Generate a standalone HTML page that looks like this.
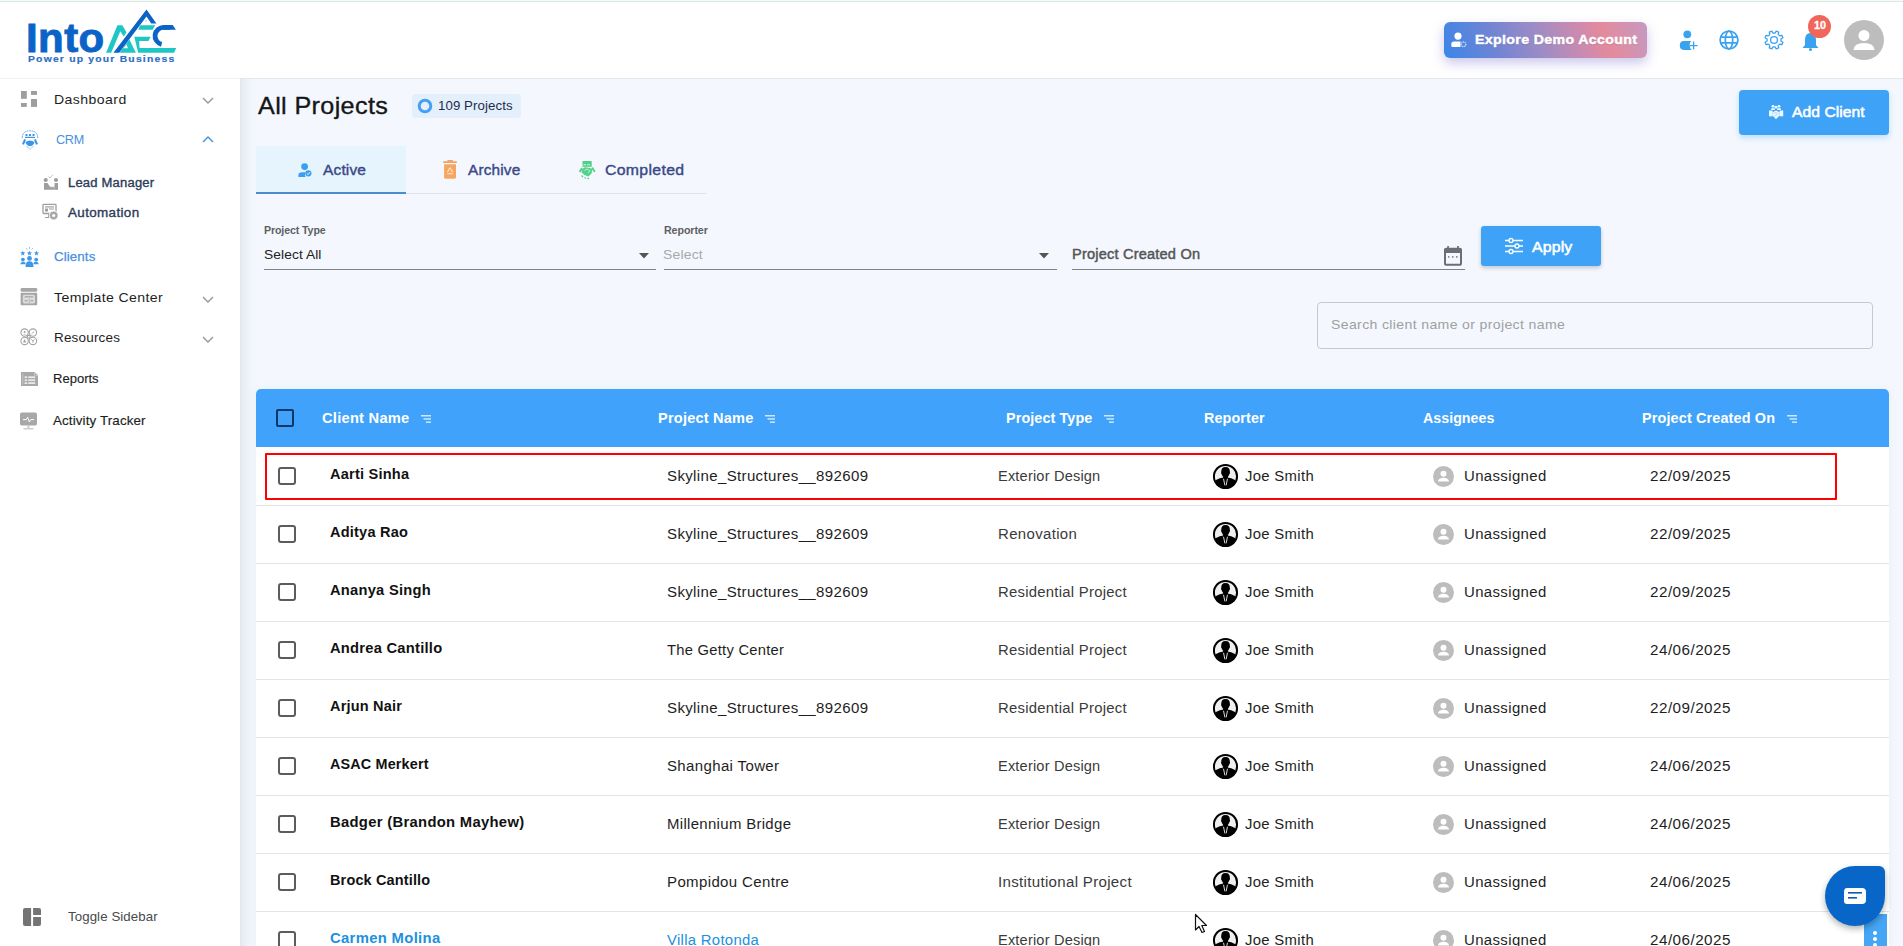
<!DOCTYPE html>
<html><head><meta charset="utf-8"><title>All Projects</title>
<style>
html,body{margin:0;padding:0;}
body{width:1903px;height:946px;overflow:hidden;position:relative;font-family:"Liberation Sans", sans-serif;background:#f4f8fe;}
.t{position:absolute;line-height:1;white-space:nowrap;font-family:"Liberation Sans", sans-serif;}
.r{position:absolute;}
svg.r{overflow:visible}
</style></head><body>
<div class="r" style="left:0px;top:0px;width:1903px;height:946px;background:#f4f8fe"></div>
<div class="r" style="left:240px;top:79px;width:14px;height:867px;background:linear-gradient(to right,#e2e8ef,#e9eef6 25%,#f4f8fe)"></div>
<div class="r" style="left:0px;top:0px;width:1903px;height:78px;background:#fff"></div>
<div class="r" style="left:0px;top:0px;width:1903px;height:1px;background:#f2fbf6"></div>
<div class="r" style="left:0px;top:1px;width:1903px;height:1px;background:#dfe7e4"></div>
<div class="r" style="left:0px;top:78px;width:240px;height:1px;background:#f1f2f2"></div>
<div class="r" style="left:240px;top:78px;width:1663px;height:1px;background:#e2e7ea"></div>
<div class="t" style="left:26.2px;top:18.09px;font-size:41px;font-weight:700;color:#0b63c7;letter-spacing:0.403px;transform:scaleX(1.0248);transform-origin:0 0;-webkit-text-stroke:0.9px #0b63c7;">Into</div>
<svg class="r" style="left:100px;top:5px" width="80" height="52" viewBox="0 0 80 52">
<polygon points="6.1,47.7 17.4,20.3 22.4,20.3 26.5,27.6 23.6,31.6 20.3,26.2 11.2,47.7" fill="#1ec6c6"/>
<polygon points="19.6,47.7 29.4,34.6 35.9,47.7" fill="#1ec6c6"/>
<polygon points="23.3,43.2 27.9,43.2 26.6,39.6" fill="#fff"/>
<polygon points="13.4,47.7 46.5,4.4 56.4,18.6 51.2,18.6 46.5,11.5 19.2,47.7" fill="#0b63c7"/>
<polygon points="40.1,20.3 55.2,20.3 52.6,24.7 38.3,24.7" fill="#1ec6c6"/>
<polygon points="34.3,31.7 50.6,31.7 48.5,36 39.2,36 39.5,43 76.2,43 74.1,47.7 38.2,47.7" fill="#1ec6c6"/>
<path d="M70,22.35 H64 A8.6,8.6 0 0 0 61.6,39.3" stroke="#0b63c7" stroke-width="4.8" fill="none"/>
<polygon points="63,19.95 72.7,19.95 75.9,24.75 63,24.75" fill="#0b63c7"/>
<rect x="45.6" y="15.3" width="1" height="1" fill="#6f9fd8"/>
</svg>
<div class="t" style="left:27.7px;top:55.12px;font-size:8.6px;font-weight:700;color:#2e6dc2;letter-spacing:0.997px;transform:scaleX(1.2057);transform-origin:0 0;-webkit-text-stroke:0.15px #2e6dc2;">Power up your Business</div>
<div class="r" style="left:1444px;top:22px;width:203px;height:36px;border-radius:6px;background:linear-gradient(70deg,#3a86e8 0%,#6f84d4 25%,#a08cc4 48%,#d08aac 68%,#e48a9c 78%,#c49ac2 100%);box-shadow:0 5px 12px rgba(115,105,205,0.38)"></div>
<svg class="r" style="left:1451px;top:32px" width="16" height="16" viewBox="0 0 16 16"><circle cx="7" cy="4.1" r="3.6" fill="#fff"/><path d="M0.3,12 Q0.3,9.5 3,9.5 L9.5,9.5 L9.5,15 L1.5,15 Q0.3,15 0.3,13.5Z" fill="#fff"/><circle cx="12.5" cy="12.3" r="2.3" fill="none" stroke="#c9dcf7" stroke-width="1.3" stroke-dasharray="1.2 0.6"/></svg>
<div class="t" style="left:1475.0px;top:33.03px;font-size:13.2px;font-weight:700;color:#fff;letter-spacing:0.34px;transform:scaleX(1.0717);transform-origin:0 0;-webkit-text-stroke:0.45px #fff;text-shadow:0 1px 1px rgba(0,0,0,0.18)">Explore Demo Account</div>
<svg class="r" style="left:1679px;top:29px" width="20" height="22" viewBox="0 0 20 22"><circle cx="8.3" cy="5.3" r="3.9" fill="#3aa3f0"/><path d="M4.8,12.1 H12.5 Q10.6,13.2 10.6,15.6 Q10.6,19 12.6,20.9 H4.8 Q0.8,20.9 0.8,16.5 Q0.8,12.1 4.8,12.1Z" fill="#3aa3f0"/><path d="M10.6,16.6 H18.6 M14.6,12.6 V20.4" stroke="#3aa3f0" stroke-width="1.3"/></svg>
<svg class="r" style="left:1719px;top:30px" width="20" height="20" viewBox="0 0 20 20"><g fill="none" stroke="#3aa3f0" stroke-width="1.7"><circle cx="10" cy="10" r="8.9"/><ellipse cx="10" cy="10" rx="3.7" ry="8.9"/><path d="M1.5,7.1H18.5M1.5,12.8H18.5"/></g></svg>
<svg class="r" style="left:1763.6px;top:30.4px" width="20" height="20" viewBox="0 0 20 20"><polygon points="11.03,3.08 12.23,1.07 14.74,2.11 14.16,4.37 15.63,5.84 17.89,5.26 18.93,7.77 16.92,8.97 16.92,11.03 18.93,12.23 17.89,14.74 15.63,14.16 14.16,15.63 14.74,17.89 12.23,18.93 11.03,16.92 8.97,16.92 7.77,18.93 5.26,17.89 5.84,15.63 4.37,14.16 2.11,14.74 1.07,12.23 3.08,11.03 3.08,8.97 1.07,7.77 2.11,5.26 4.37,5.84 5.84,4.37 5.26,2.11 7.77,1.07 8.97,3.08" fill="none" stroke="#3aa3f0" stroke-width="1.3" stroke-linejoin="round"/><circle cx="10" cy="10" r="3.4" fill="none" stroke="#3aa3f0" stroke-width="1.3"/></svg>
<svg class="r" style="left:1802px;top:32px" width="17" height="19" viewBox="0 0 17 19"><path d="M8.5,1 Q14,1 14,8 L14,13 L16.5,16 L0.5,16 L3,13 L3,8 Q3,1 8.5,1Z" fill="#3aa3f0"/><circle cx="8.5" cy="17.5" r="1.5" fill="#3aa3f0"/></svg>
<div class="r" style="left:1808px;top:15px;width:23px;height:23px;border-radius:50%;background:#f0665a"></div>
<div class="t" style="left:1813.8px;top:20.29px;font-size:11px;font-weight:700;color:#fff;letter-spacing:-0.122px;transform:scaleX(0.9852);transform-origin:0 0;-webkit-text-stroke:0.3px #fff;">10</div>
<div class="r" style="left:1844px;top:20px;width:40px;height:40px;border-radius:50%;background:#bdbdbd"></div>
<svg class="r" style="left:1844px;top:20px" width="40" height="40" viewBox="0 0 40 40"><circle cx="20" cy="15.5" r="5.5" fill="#fff"/><path d="M9.5,30 Q10,23 20,23 Q30,23 30.5,30 Z" fill="#fff"/></svg>
<div class="r" style="left:0px;top:79px;width:240px;height:867px;background:#fff"></div>
<svg class="r" style="left:21px;top:91px" width="16" height="16" viewBox="0 0 16 16"><g fill="#9e9e9e"><rect x="0" y="0" width="5.8" height="7.8"/><rect x="0" y="12" width="5.8" height="3.9"/><rect x="10" y="0" width="6" height="3.9"/><rect x="10" y="8" width="6" height="7.9"/></g></svg>
<div class="t" style="left:53.8px;top:93.00px;font-size:13px;font-weight:400;color:#1e1e1e;letter-spacing:0.398px;transform:scaleX(1.0811);transform-origin:0 0;">Dashboard</div>
<svg class="r" style="left:202px;top:97px" width="12" height="7" viewBox="0 0 12 7"><path d="M1,1 L6,6 L11,1" fill="none" stroke="#969696" stroke-width="1.4"/></svg>
<svg class="r" style="left:21px;top:130px" width="18" height="20" viewBox="0 0 18 20"><g fill="none" stroke="#4a9ae8" stroke-width="0.9" stroke-dasharray="1.6 0.6"><path d="M1.2,8 Q1.5,0.8 9,0.8 Q16.5,0.8 16.8,8"/></g><g fill="#3d93e6"><rect x="4.5" y="4" width="2" height="2"/><rect x="8" y="4" width="2" height="2"/><rect x="11.5" y="4" width="2" height="2"/><rect x="4" y="6.8" width="10" height="1.2"/><path d="M1,14 L3.2,9 L5,9.7 L3,14.8Z"/><path d="M17,14 L14.8,9 L13,9.7 L15,14.8Z"/><path d="M4.5,12 Q9,8.8 13.5,12 Q13,15.5 9,16.2 Q5,15.5 4.5,12Z"/></g><path d="M5.5,16 L9,19.5 L12.5,16" fill="none" stroke="#4a9ae8" stroke-width="0.9" stroke-dasharray="1 0.7"/></svg>
<div class="t" style="left:55.8px;top:133.00px;font-size:13px;font-weight:400;color:#4a8fe0;letter-spacing:-0.288px;transform:scaleX(0.9716);transform-origin:0 0;">CRM</div>
<svg class="r" style="left:202px;top:136px" width="12" height="7" viewBox="0 0 12 7"><path d="M1,6 L6,1 L11,6" fill="none" stroke="#3d8fe0" stroke-width="1.4"/></svg>
<svg class="r" style="left:43px;top:174px" width="16" height="16" viewBox="0 0 16 16"><g fill="#9e9e9e"><circle cx="2.7" cy="6" r="2.1"/><circle cx="13" cy="6" r="2.1"/><path d="M1,9 H4.5 L7,12.8 L11.5,12.8 V15.8 H1Z"/><path d="M11.5,9 H15 V15.8 H11.5Z"/></g><path d="M5.5,2.5 L7,4 L10,0.8" fill="none" stroke="#b0b0b0" stroke-width="0.8"/><path d="M11,12.8 H8" stroke="#fff" stroke-width="0.6"/></svg>
<div class="t" style="left:68.1px;top:177.42px;font-size:12.5px;font-weight:400;color:#2b3b5a;letter-spacing:0.192px;transform:scaleX(1.0409);transform-origin:0 0;-webkit-text-stroke:0.35px #2b3b5a;">Lead Manager</div>
<svg class="r" style="left:42px;top:203px" width="18" height="18" viewBox="0 0 18 18"><rect x="1" y="1.3" width="13" height="9.2" rx="0.8" fill="none" stroke="#9e9e9e" stroke-width="1.3"/><rect x="3" y="3.3" width="9" height="1.2" fill="#9e9e9e"/><rect x="3" y="5.5" width="3" height="3" fill="#9e9e9e"/><rect x="7" y="5.5" width="5" height="1" fill="#9e9e9e"/><rect x="6" y="11" width="3" height="3" fill="#9e9e9e"/><rect x="3" y="14" width="8" height="1" fill="#9e9e9e"/><circle cx="11.7" cy="12.5" r="5" fill="#fff"/><circle cx="11.7" cy="12.5" r="4.2" fill="#a8a8a8" stroke="#fff" stroke-width="0.6" stroke-dasharray="1.2 1"/><circle cx="11.7" cy="12.5" r="1.6" fill="#fff"/></svg>
<div class="t" style="left:68.1px;top:207.22px;font-size:12.5px;font-weight:400;color:#2b3b5a;letter-spacing:0.327px;transform:scaleX(1.0750);transform-origin:0 0;-webkit-text-stroke:0.35px #2b3b5a;">Automation</div>
<svg class="r" style="left:20px;top:247px" width="19" height="21" viewBox="0 0 19 21"><g fill="#3d97ec"><polygon points="2.80,3.70 3.49,5.35 5.27,5.50 3.91,6.66 4.33,8.40 2.80,7.47 1.27,8.40 1.69,6.66 0.33,5.50 2.11,5.35"/><polygon points="9.50,3.70 10.19,5.35 11.97,5.50 10.61,6.66 11.03,8.40 9.50,7.47 7.97,8.40 8.39,6.66 7.03,5.50 8.81,5.35"/><polygon points="16.50,3.70 17.19,5.35 18.97,5.50 17.61,6.66 18.03,8.40 16.50,7.47 14.97,8.40 15.39,6.66 14.03,5.50 15.81,5.35"/><circle cx="9.5" cy="11.4" r="2.4"/><circle cx="2.9" cy="12.6" r="1.9"/><circle cx="16.2" cy="12.6" r="1.9"/><path d="M0.2,17.3 Q0.5,14.8 2.9,14.8 Q5,14.8 5.6,16.2 L5.2,17.3Z"/><path d="M18.8,17.3 Q18.5,14.8 16.2,14.8 Q14,14.8 13.4,16.2 L13.8,17.3Z"/><path d="M5.5,19.5 Q5.5,14.3 9.5,14.3 Q13.5,14.3 13.5,19.5 Q13.5,20 13,20 L6,20 Q5.5,20 5.5,19.5Z"/></g><g stroke="#3d97ec" stroke-width="0.7"><path d="M9.5,0.2 V1.8"/><path d="M6.2,1.2 L7.2,2.4"/><path d="M12.8,1.2 L11.8,2.4"/></g></svg>
<div class="t" style="left:54.4px;top:250.00px;font-size:13px;font-weight:400;color:#4a8fe0;letter-spacing:0.104px;transform:scaleX(1.0242);transform-origin:0 0;-webkit-text-stroke:0.25px #4a8fe0;">Clients</div>
<svg class="r" style="left:20px;top:288px" width="18" height="18" viewBox="0 0 18 18"><rect x="0.6" y="0" width="16.6" height="3.8" rx="1.3" fill="#a6a6a6"/><rect x="0.6" y="4.8" width="16.6" height="12.4" rx="1" fill="#a6a6a6"/><rect x="2.8" y="6.8" width="12.2" height="8.6" rx="1.6" fill="#dcdcdc"/><rect x="4.6" y="8.3" width="8.6" height="1.1" fill="#9e9e9e"/><rect x="4.6" y="12.2" width="3" height="1.1" fill="#9e9e9e"/><rect x="10.5" y="12.2" width="2.7" height="1.1" fill="#9e9e9e"/><rect x="8.8" y="10.5" width="1.1" height="4.9" fill="#bdbdbd"/></svg>
<div class="t" style="left:54.0px;top:291.00px;font-size:13px;font-weight:400;color:#1e1e1e;letter-spacing:0.353px;transform:scaleX(1.0843);transform-origin:0 0;">Template Center</div>
<svg class="r" style="left:202px;top:295.5px" width="12" height="7" viewBox="0 0 12 7"><path d="M1,1 L6,6 L11,1" fill="none" stroke="#969696" stroke-width="1.4"/></svg>
<svg class="r" style="left:20px;top:328px" width="18" height="18" viewBox="0 0 18 18"><g fill="none" stroke="#a3a3a3" stroke-width="1.1"><circle cx="4.6" cy="4.6" r="3.7"/><circle cx="12.9" cy="4.6" r="3.7"/><circle cx="4.6" cy="12.9" r="3.7"/><circle cx="12.9" cy="12.9" r="3.7"/><rect x="7.4" y="7.4" width="2.7" height="2.7"/></g><g fill="#a3a3a3"><circle cx="4.6" cy="4" r="1"/><path d="M3,6.6 Q4.6,5 6.2,6.6Z"/><path d="M11.5,5.8 L14.3,3.3" stroke="#a3a3a3" stroke-width="0.9"/><path d="M4.6,11 L3,14.5 H6.2Z"/><path d="M11.3,11.2 L12.9,13 L14.5,11.2 M12.9,13 V14.8" stroke="#a3a3a3" stroke-width="0.9" fill="none"/></g></svg>
<div class="t" style="left:54.0px;top:331.00px;font-size:13px;font-weight:400;color:#1e1e1e;letter-spacing:0.183px;transform:scaleX(1.0367);transform-origin:0 0;">Resources</div>
<svg class="r" style="left:202px;top:335.5px" width="12" height="7" viewBox="0 0 12 7"><path d="M1,1 L6,6 L11,1" fill="none" stroke="#969696" stroke-width="1.4"/></svg>
<svg class="r" style="left:21px;top:372px" width="17" height="14" viewBox="0 0 17 14"><path d="M0,0 H13.5 L17,3.3 V14 H0Z" fill="#a8a8a8"/><path d="M13.5,0 V3.3 H17" fill="none" stroke="#d6d6d6" stroke-width="0.7"/><rect x="1.5" y="1.5" width="0.7" height="11" fill="#cfcfcf"/><g fill="#e9e9e9"><rect x="3.6" y="4.3" width="2.6" height="1.8"/><rect x="3.6" y="7.3" width="2.6" height="1.8"/><rect x="3.6" y="10.2" width="2.6" height="1.8"/><rect x="7.2" y="4.3" width="7" height="1.8"/><rect x="7.2" y="7.3" width="7" height="1.8"/><rect x="7.2" y="10.2" width="7" height="1.8"/></g></svg>
<div class="t" style="left:52.7px;top:371.80px;font-size:13px;font-weight:400;color:#1e1e1e;letter-spacing:0.007px;transform:scaleX(1.0013);transform-origin:0 0;-webkit-text-stroke:0.15px #1e1e1e;">Reports</div>
<svg class="r" style="left:20px;top:412px" width="18" height="18" viewBox="0 0 18 18"><rect x="0" y="0.4" width="17" height="13.2" rx="1.8" fill="#a8a8a8"/><path d="M3,7.6 H6.3 L7.6,5.2 L9.4,10 L10.7,7.6 H14" fill="none" stroke="#fff" stroke-width="1"/><rect x="7.5" y="14" width="2" height="1.8" fill="#c4c4c4"/><rect x="3.5" y="16.2" width="10" height="1.2" fill="#c4c4c4"/></svg>
<div class="t" style="left:53.0px;top:413.50px;font-size:13px;font-weight:400;color:#1e1e1e;letter-spacing:0.114px;transform:scaleX(1.0300);transform-origin:0 0;-webkit-text-stroke:0.15px #1e1e1e;">Activity Tracker</div>
<svg class="r" style="left:23px;top:908px" width="18" height="18" viewBox="0 0 18 18"><rect x="0" y="0" width="18" height="18" rx="2" fill="#747474"/><rect x="8.1" y="0" width="2" height="18" fill="#fff"/><rect x="10" y="7" width="8" height="2" fill="#fff"/></svg>
<div class="t" style="left:67.5px;top:910.00px;font-size:13px;font-weight:400;color:#4a4a4a;letter-spacing:0.087px;transform:scaleX(1.0201);transform-origin:0 0;">Toggle Sidebar</div>
<div class="t" style="left:257.6px;top:93.68px;font-size:24px;font-weight:400;color:#161616;letter-spacing:0.34px;transform:scaleX(1.0490);transform-origin:0 0;-webkit-text-stroke:0.35px #161616;">All Projects</div>
<div class="r" style="left:412px;top:94px;width:109px;height:24px;background:#e3f0fc;border-radius:3px"></div>
<svg class="r" style="left:417px;top:98px" width="16" height="16" viewBox="0 0 16 16"><circle cx="8" cy="8" r="5.8" fill="none" stroke="#469ff0" stroke-width="3"/></svg>
<div class="t" style="left:438.0px;top:98.80px;font-size:13px;font-weight:400;color:#1f2b4d;letter-spacing:0.082px;transform:scaleX(1.0191);transform-origin:0 0;">109 Projects</div>
<div class="r" style="left:1739px;top:90px;width:150px;height:45px;background:#3ea2f7;border-radius:4px;box-shadow:0 3px 6px rgba(62,162,247,0.3)"></div>
<svg class="r" style="left:1768px;top:104px" width="17" height="17" viewBox="0 0 17 17"><g fill="#eefaff"><circle cx="5" cy="2.3" r="1.4"/><circle cx="8" cy="3.2" r="1.4"/><circle cx="11" cy="2.3" r="1.4"/><rect x="3" y="4.2" width="4" height="1.8" rx="0.8"/><rect x="9" y="4.2" width="4" height="1.8" rx="0.8"/><rect x="1" y="6.5" width="3.6" height="5.8"/><rect x="11.6" y="6.5" width="3.6" height="5.8"/><path d="M4.6,8.2 L8,6.6 L11.6,8.2 L11.6,11.5 L8,15.2 L4.6,11.5Z"/></g><path d="M5.5,9.5 L8,8.5 L10.5,10 M6.5,12 L9,10.5" stroke="#7fbdf5" stroke-width="0.6" fill="none"/></svg>
<div class="t" style="left:1792.0px;top:104.48px;font-size:15.5px;font-weight:400;color:#fff;letter-spacing:0.053px;transform:scaleX(1.0101);transform-origin:0 0;-webkit-text-stroke:0.55px #fff;">Add Client</div>
<div class="r" style="left:256px;top:146px;width:150px;height:46px;background:#e6f4fd"></div>
<div class="r" style="left:256px;top:193px;width:450px;height:1px;background:#dde1e8"></div>
<div class="r" style="left:256px;top:192px;width:150px;height:2px;background:#4b8dcc"></div>
<svg class="r" style="left:297px;top:162px" width="16" height="16" viewBox="0 0 16 16"><circle cx="7.6" cy="4.6" r="3.4" fill="#3a9ff3"/><path d="M1.4,14.9 V13 Q1.4,10.2 5,10.2 L8.8,10.2 Q7.6,12.5 8.6,14.9Z" fill="#3a9ff3"/><circle cx="11.4" cy="11.3" r="3.1" fill="#3a9ff3"/><path d="M9.9,11.6 L11.1,12.6 L13,10.1" stroke="#e5f2fd" stroke-width="1" fill="none"/></svg>
<div class="t" style="left:323.0px;top:161.90px;font-size:15px;font-weight:400;color:#3a4886;letter-spacing:0.163px;transform:scaleX(1.0309);transform-origin:0 0;-webkit-text-stroke:0.4px #3a4886;">Active</div>
<svg class="r" style="left:443px;top:159px" width="15" height="21" viewBox="0 0 15 21"><rect x="0.1" y="2.2" width="13.8" height="1.7" rx="0.5" fill="#f2a062"/><rect x="4.3" y="0.9" width="5.7" height="1.5" rx="0.5" fill="#f2a062"/><path d="M1.1,5.2 H13 V18.3 Q13,19.7 11.6,19.7 H2.5 Q1.1,19.7 1.1,18.3Z" fill="#f5a661"/><path d="M7,8.6 L9.6,13.2 M9.8,14.8 H4.2 M4.5,13 L6.6,9.3" fill="none" stroke="#fde6cf" stroke-width="1.1"/></svg>
<div class="t" style="left:468.2px;top:161.90px;font-size:15px;font-weight:400;color:#3a4886;letter-spacing:0.143px;transform:scaleX(1.0264);transform-origin:0 0;-webkit-text-stroke:0.4px #3a4886;">Archive</div>
<svg class="r" style="left:572px;top:155px" width="30" height="30" viewBox="0 0 30 30"><rect x="10.5" y="6" width="9.2" height="5.8" fill="#52cf88"/><rect x="11.5" y="9" width="2.5" height="1.4" fill="#b0f2cc"/><rect x="15" y="9.2" width="3" height="1.2" fill="#b0f2cc"/><path d="M6.8,16.5 L9.2,12.5 L10.8,13.6 L8.4,17.4Z" fill="#52cf88"/><path d="M23.5,16.5 L21,12 L19.4,13.2 L22,17.2Z" fill="#52cf88"/><path d="M9.8,14.8 L12.5,12.2 L17,12.8 L20.5,14 L19.5,18.5 L16.5,21.5 L12.5,20 L9.6,17.6Z" fill="#55d28a"/><path d="M12.5,15.5 L15,14 L18,15.8 L16,18" fill="none" stroke="#b0f2cc" stroke-width="1"/><path d="M9.5,20.5 L11,22 M12.5,22.5 L14,23.3 M15.5,23.2 L17,23.6" stroke="#52cf88" stroke-width="1.2"/></svg>
<div class="t" style="left:605.0px;top:161.90px;font-size:15px;font-weight:400;color:#3a4886;letter-spacing:0.308px;transform:scaleX(1.0538);transform-origin:0 0;-webkit-text-stroke:0.4px #3a4886;">Completed</div>
<div class="t" style="left:263.7px;top:225.09px;font-size:11px;font-weight:700;color:#5f5f5f;letter-spacing:-0.132px;transform:scaleX(0.9678);transform-origin:0 0;">Project Type</div>
<div class="t" style="left:263.7px;top:248.17px;font-size:13.5px;font-weight:400;color:#222;letter-spacing:0.083px;transform:scaleX(1.0205);transform-origin:0 0;">Select All</div>
<div class="r" style="left:264px;top:268.8px;width:392px;height:1.1999999999999886px;background:#828282;height:1.3px"></div>
<svg class="r" style="left:639px;top:253px" width="11" height="6" viewBox="0 0 11 6"><path d="M0,0 H10 L5,5.5Z" fill="#555"/></svg>
<div class="t" style="left:664.2px;top:225.09px;font-size:11px;font-weight:700;color:#5f5f5f;letter-spacing:-0.117px;transform:scaleX(0.9738);transform-origin:0 0;">Reporter</div>
<div class="t" style="left:663.4px;top:248.17px;font-size:13.5px;font-weight:400;color:#a9a9a9;letter-spacing:0.17px;transform:scaleX(1.0352);transform-origin:0 0;">Select</div>
<div class="r" style="left:664px;top:268.8px;width:393px;height:1.1999999999999886px;background:#828282;height:1.3px"></div>
<svg class="r" style="left:1039px;top:253px" width="11" height="6" viewBox="0 0 11 6"><path d="M0,0 H10 L5,5.5Z" fill="#555"/></svg>
<div class="t" style="left:1072.1px;top:247.15px;font-size:14px;font-weight:400;color:#555;letter-spacing:0.185px;transform:scaleX(1.0411);transform-origin:0 0;-webkit-text-stroke:0.45px #555;">Project Created On</div>
<div class="r" style="left:1072px;top:268.8px;width:393px;height:1.1999999999999886px;background:#828282;height:1.3px"></div>
<svg class="r" style="left:1444px;top:245px" width="18" height="21" viewBox="0 0 18 21"><rect x="1" y="3.8" width="16" height="16" rx="1.6" fill="none" stroke="#6b6f72" stroke-width="2"/><rect x="0.2" y="3" width="17.6" height="5" rx="1.6" fill="#6b6f72"/><rect x="3.2" y="1" width="1.7" height="3" fill="#6b6f72"/><rect x="13.1" y="1" width="1.7" height="3" fill="#6b6f72"/><rect x="4" y="11.2" width="1.4" height="1.4" fill="#6b6f72"/><rect x="8" y="11.2" width="1.5" height="1.4" fill="#6b6f72"/><rect x="12" y="11.2" width="1.5" height="1.4" fill="#6b6f72"/></svg>
<div class="r" style="left:1481px;top:226px;width:120px;height:40px;background:#3ea2f7;border-radius:3px;box-shadow:0 2px 4px rgba(0,0,0,0.2)"></div>
<svg class="r" style="left:1505px;top:238px" width="19" height="16" viewBox="0 0 19 16"><g stroke="#fff" stroke-width="1.4" fill="none"><path d="M0,2.5H18M0,8H18M0,13.5H18"/></g><g fill="#3ea2f7" stroke="#fff" stroke-width="1.3"><circle cx="6" cy="2.5" r="2"/><circle cx="12" cy="8" r="2"/><circle cx="6" cy="13.5" r="2"/></g></svg>
<div class="t" style="left:1532.4px;top:239.38px;font-size:15.5px;font-weight:400;color:#fff;letter-spacing:0.147px;transform:scaleX(1.0232);transform-origin:0 0;-webkit-text-stroke:0.55px #fff;">Apply</div>
<div class="r" style="left:1317px;top:302px;width:556px;height:47px;border:1px solid #c5c9cd;border-radius:4px;box-sizing:border-box"></div>
<div class="t" style="left:1331.1px;top:317.90px;font-size:13px;font-weight:400;color:#a0a0a0;letter-spacing:0.32px;transform:scaleX(1.0836);transform-origin:0 0;">Search client name or project name</div>
<div class="r" style="left:256px;top:389px;width:1633px;height:557px;background:#fff;border-radius:5px 5px 0 0;box-shadow:0 0 9px 1px rgba(120,145,150,0.08)"></div>
<div class="r" style="left:256px;top:389px;width:1633px;height:58px;background:#40a2fb;border-radius:5px 5px 0 0"></div>
<div class="r" style="left:256px;top:447px;width:1633px;height:499px;background:#fff"></div>
<div class="r" style="left:276px;top:409px;width:18px;height:18px;border:2px solid #0e3966;border-radius:2px;box-sizing:border-box"></div>
<div class="t" style="left:321.7px;top:410.75px;font-size:14px;font-weight:700;color:#fff;letter-spacing:0.241px;transform:scaleX(1.0467);transform-origin:0 0;">Client Name</div>
<svg class="r" style="left:421px;top:415px" width="10" height="8" viewBox="0 0 10 8"><g fill="#cde8ff"><rect x="0" y="0" width="10" height="1.5"/><rect x="2.5" y="3.2" width="7.5" height="1.5"/><rect x="5" y="6.4" width="5" height="1.5"/></g></svg>
<div class="t" style="left:658.4px;top:410.75px;font-size:14px;font-weight:700;color:#fff;letter-spacing:0.203px;transform:scaleX(1.0389);transform-origin:0 0;">Project Name</div>
<svg class="r" style="left:764.5px;top:415px" width="10" height="8" viewBox="0 0 10 8"><g fill="#cde8ff"><rect x="0" y="0" width="10" height="1.5"/><rect x="2.5" y="3.2" width="7.5" height="1.5"/><rect x="5" y="6.4" width="5" height="1.5"/></g></svg>
<div class="t" style="left:1006.1px;top:410.75px;font-size:14px;font-weight:700;color:#fff;letter-spacing:0.117px;transform:scaleX(1.0239);transform-origin:0 0;">Project Type</div>
<svg class="r" style="left:1104px;top:415px" width="10" height="8" viewBox="0 0 10 8"><g fill="#cde8ff"><rect x="0" y="0" width="10" height="1.5"/><rect x="2.5" y="3.2" width="7.5" height="1.5"/><rect x="5" y="6.4" width="5" height="1.5"/></g></svg>
<div class="t" style="left:1203.9px;top:410.75px;font-size:14px;font-weight:700;color:#fff;letter-spacing:0.123px;transform:scaleX(1.0226);transform-origin:0 0;">Reporter</div>
<div class="t" style="left:1423.1px;top:410.75px;font-size:14px;font-weight:700;color:#fff;letter-spacing:0.064px;transform:scaleX(1.0111);transform-origin:0 0;">Assignees</div>
<div class="t" style="left:1641.9px;top:410.75px;font-size:14px;font-weight:700;color:#fff;letter-spacing:0.14px;transform:scaleX(1.0289);transform-origin:0 0;">Project Created On</div>
<svg class="r" style="left:1786.5px;top:415px" width="10" height="8" viewBox="0 0 10 8"><g fill="#cde8ff"><rect x="0" y="0" width="10" height="1.5"/><rect x="2.5" y="3.2" width="7.5" height="1.5"/><rect x="5" y="6.4" width="5" height="1.5"/></g></svg>
<div class="r" style="left:278.2px;top:466.9px;width:17.80000000000001px;height:17.900000000000034px;border:2px solid #5c5c5c;border-radius:3px;box-sizing:border-box"></div>
<div class="t" style="left:329.8px;top:467.05px;font-size:14px;font-weight:700;color:#111;letter-spacing:0.196px;transform:scaleX(1.0414);transform-origin:0 0;">Aarti Sinha</div>
<div class="t" style="left:666.9px;top:469.15px;font-size:14px;font-weight:400;color:#1e1e1e;letter-spacing:0.328px;transform:scaleX(1.0737);transform-origin:0 0;">Skyline_Structures__892609</div>
<div class="t" style="left:997.8px;top:469.15px;font-size:14px;font-weight:400;color:#3a3a3a;letter-spacing:0.178px;transform:scaleX(1.0408);transform-origin:0 0;">Exterior Design</div>
<svg class="r" style="left:1213px;top:464px" width="25" height="25" viewBox="0 0 24 24"><circle cx="12" cy="12" r="11.1" fill="#efefef" stroke="#000" stroke-width="1.9"/>
<path d="M12,2.9 Q16.3,2.9 16.2,7.6 Q16.7,8.9 15.8,9.6 Q15,12.2 13.5,13.1 L10.5,13.1 Q9,12.2 8.2,9.6 Q7.4,8.9 7.9,7.6 Q7.8,2.9 12,2.9Z" fill="#000"/>
<path d="M1.8,16.6 Q3.5,14.3 9,13.3 L12,17 L15,13.3 Q20.5,14.3 22.2,16.6 A11,11 0 0 1 1.8,16.6Z" fill="#000"/>
<path d="M10,12.2 H14 L15,13.5 L12,19 L9,13.5Z" fill="#000"/><path d="M10.1,14.2 L11.4,20.5 M13.9,14.2 L12.6,20.5" stroke="#e6e6e6" stroke-width="0.9"/></svg>
<div class="t" style="left:1245.1px;top:469.15px;font-size:14px;font-weight:400;color:#1e1e1e;letter-spacing:0.301px;transform:scaleX(1.0617);transform-origin:0 0;">Joe Smith</div>
<svg class="r" style="left:1433px;top:466px" width="21" height="21" viewBox="0 0 21 21"><circle cx="10.5" cy="10.5" r="10.5" fill="#bdbdbd"/><circle cx="10.5" cy="7.8" r="3" fill="#fff"/><path d="M5,15.5 Q5.5,11.8 10.5,11.8 Q15.5,11.8 16,15.5Z" fill="#fff"/></svg>
<div class="t" style="left:1463.6px;top:469.15px;font-size:14px;font-weight:400;color:#1e1e1e;letter-spacing:0.346px;transform:scaleX(1.0674);transform-origin:0 0;">Unassigned</div>
<div class="t" style="left:1649.6px;top:469.15px;font-size:14px;font-weight:400;color:#1e1e1e;letter-spacing:0.424px;transform:scaleX(1.0890);transform-origin:0 0;">22/09/2025</div>
<div class="r" style="left:256px;top:505.0px;width:1633px;height:1.0px;background:#e4e4e4"></div>
<div class="r" style="left:278.2px;top:524.9px;width:17.80000000000001px;height:17.899999999999977px;border:2px solid #5c5c5c;border-radius:3px;box-sizing:border-box"></div>
<div class="t" style="left:329.8px;top:525.05px;font-size:14px;font-weight:700;color:#111;letter-spacing:0.201px;transform:scaleX(1.0386);transform-origin:0 0;">Aditya Rao</div>
<div class="t" style="left:666.9px;top:527.15px;font-size:14px;font-weight:400;color:#1e1e1e;letter-spacing:0.328px;transform:scaleX(1.0737);transform-origin:0 0;">Skyline_Structures__892609</div>
<div class="t" style="left:997.8px;top:527.15px;font-size:14px;font-weight:400;color:#3a3a3a;letter-spacing:0.333px;transform:scaleX(1.0678);transform-origin:0 0;">Renovation</div>
<svg class="r" style="left:1213px;top:522px" width="25" height="25" viewBox="0 0 24 24"><circle cx="12" cy="12" r="11.1" fill="#efefef" stroke="#000" stroke-width="1.9"/>
<path d="M12,2.9 Q16.3,2.9 16.2,7.6 Q16.7,8.9 15.8,9.6 Q15,12.2 13.5,13.1 L10.5,13.1 Q9,12.2 8.2,9.6 Q7.4,8.9 7.9,7.6 Q7.8,2.9 12,2.9Z" fill="#000"/>
<path d="M1.8,16.6 Q3.5,14.3 9,13.3 L12,17 L15,13.3 Q20.5,14.3 22.2,16.6 A11,11 0 0 1 1.8,16.6Z" fill="#000"/>
<path d="M10,12.2 H14 L15,13.5 L12,19 L9,13.5Z" fill="#000"/><path d="M10.1,14.2 L11.4,20.5 M13.9,14.2 L12.6,20.5" stroke="#e6e6e6" stroke-width="0.9"/></svg>
<div class="t" style="left:1245.1px;top:527.15px;font-size:14px;font-weight:400;color:#1e1e1e;letter-spacing:0.301px;transform:scaleX(1.0617);transform-origin:0 0;">Joe Smith</div>
<svg class="r" style="left:1433px;top:524px" width="21" height="21" viewBox="0 0 21 21"><circle cx="10.5" cy="10.5" r="10.5" fill="#bdbdbd"/><circle cx="10.5" cy="7.8" r="3" fill="#fff"/><path d="M5,15.5 Q5.5,11.8 10.5,11.8 Q15.5,11.8 16,15.5Z" fill="#fff"/></svg>
<div class="t" style="left:1463.6px;top:527.15px;font-size:14px;font-weight:400;color:#1e1e1e;letter-spacing:0.346px;transform:scaleX(1.0674);transform-origin:0 0;">Unassigned</div>
<div class="t" style="left:1649.6px;top:527.15px;font-size:14px;font-weight:400;color:#1e1e1e;letter-spacing:0.424px;transform:scaleX(1.0890);transform-origin:0 0;">22/09/2025</div>
<div class="r" style="left:256px;top:563.0px;width:1633px;height:1.0px;background:#e4e4e4"></div>
<div class="r" style="left:278.2px;top:582.9px;width:17.80000000000001px;height:17.899999999999977px;border:2px solid #5c5c5c;border-radius:3px;box-sizing:border-box"></div>
<div class="t" style="left:329.8px;top:583.05px;font-size:14px;font-weight:700;color:#111;letter-spacing:0.254px;transform:scaleX(1.0469);transform-origin:0 0;">Ananya Singh</div>
<div class="t" style="left:666.9px;top:585.15px;font-size:14px;font-weight:400;color:#1e1e1e;letter-spacing:0.328px;transform:scaleX(1.0737);transform-origin:0 0;">Skyline_Structures__892609</div>
<div class="t" style="left:997.8px;top:585.15px;font-size:14px;font-weight:400;color:#3a3a3a;letter-spacing:0.249px;transform:scaleX(1.0612);transform-origin:0 0;">Residential Project</div>
<svg class="r" style="left:1213px;top:580px" width="25" height="25" viewBox="0 0 24 24"><circle cx="12" cy="12" r="11.1" fill="#efefef" stroke="#000" stroke-width="1.9"/>
<path d="M12,2.9 Q16.3,2.9 16.2,7.6 Q16.7,8.9 15.8,9.6 Q15,12.2 13.5,13.1 L10.5,13.1 Q9,12.2 8.2,9.6 Q7.4,8.9 7.9,7.6 Q7.8,2.9 12,2.9Z" fill="#000"/>
<path d="M1.8,16.6 Q3.5,14.3 9,13.3 L12,17 L15,13.3 Q20.5,14.3 22.2,16.6 A11,11 0 0 1 1.8,16.6Z" fill="#000"/>
<path d="M10,12.2 H14 L15,13.5 L12,19 L9,13.5Z" fill="#000"/><path d="M10.1,14.2 L11.4,20.5 M13.9,14.2 L12.6,20.5" stroke="#e6e6e6" stroke-width="0.9"/></svg>
<div class="t" style="left:1245.1px;top:585.15px;font-size:14px;font-weight:400;color:#1e1e1e;letter-spacing:0.301px;transform:scaleX(1.0617);transform-origin:0 0;">Joe Smith</div>
<svg class="r" style="left:1433px;top:582px" width="21" height="21" viewBox="0 0 21 21"><circle cx="10.5" cy="10.5" r="10.5" fill="#bdbdbd"/><circle cx="10.5" cy="7.8" r="3" fill="#fff"/><path d="M5,15.5 Q5.5,11.8 10.5,11.8 Q15.5,11.8 16,15.5Z" fill="#fff"/></svg>
<div class="t" style="left:1463.6px;top:585.15px;font-size:14px;font-weight:400;color:#1e1e1e;letter-spacing:0.346px;transform:scaleX(1.0674);transform-origin:0 0;">Unassigned</div>
<div class="t" style="left:1649.6px;top:585.15px;font-size:14px;font-weight:400;color:#1e1e1e;letter-spacing:0.424px;transform:scaleX(1.0890);transform-origin:0 0;">22/09/2025</div>
<div class="r" style="left:256px;top:621.0px;width:1633px;height:1.0px;background:#e4e4e4"></div>
<div class="r" style="left:278.2px;top:640.9px;width:17.80000000000001px;height:17.899999999999977px;border:2px solid #5c5c5c;border-radius:3px;box-sizing:border-box"></div>
<div class="t" style="left:329.8px;top:641.05px;font-size:14px;font-weight:700;color:#111;letter-spacing:0.237px;transform:scaleX(1.0504);transform-origin:0 0;">Andrea Cantillo</div>
<div class="t" style="left:666.9px;top:643.15px;font-size:14px;font-weight:400;color:#1e1e1e;letter-spacing:0.243px;transform:scaleX(1.0536);transform-origin:0 0;">The Getty Center</div>
<div class="t" style="left:997.8px;top:643.15px;font-size:14px;font-weight:400;color:#3a3a3a;letter-spacing:0.249px;transform:scaleX(1.0612);transform-origin:0 0;">Residential Project</div>
<svg class="r" style="left:1213px;top:638px" width="25" height="25" viewBox="0 0 24 24"><circle cx="12" cy="12" r="11.1" fill="#efefef" stroke="#000" stroke-width="1.9"/>
<path d="M12,2.9 Q16.3,2.9 16.2,7.6 Q16.7,8.9 15.8,9.6 Q15,12.2 13.5,13.1 L10.5,13.1 Q9,12.2 8.2,9.6 Q7.4,8.9 7.9,7.6 Q7.8,2.9 12,2.9Z" fill="#000"/>
<path d="M1.8,16.6 Q3.5,14.3 9,13.3 L12,17 L15,13.3 Q20.5,14.3 22.2,16.6 A11,11 0 0 1 1.8,16.6Z" fill="#000"/>
<path d="M10,12.2 H14 L15,13.5 L12,19 L9,13.5Z" fill="#000"/><path d="M10.1,14.2 L11.4,20.5 M13.9,14.2 L12.6,20.5" stroke="#e6e6e6" stroke-width="0.9"/></svg>
<div class="t" style="left:1245.1px;top:643.15px;font-size:14px;font-weight:400;color:#1e1e1e;letter-spacing:0.301px;transform:scaleX(1.0617);transform-origin:0 0;">Joe Smith</div>
<svg class="r" style="left:1433px;top:640px" width="21" height="21" viewBox="0 0 21 21"><circle cx="10.5" cy="10.5" r="10.5" fill="#bdbdbd"/><circle cx="10.5" cy="7.8" r="3" fill="#fff"/><path d="M5,15.5 Q5.5,11.8 10.5,11.8 Q15.5,11.8 16,15.5Z" fill="#fff"/></svg>
<div class="t" style="left:1463.6px;top:643.15px;font-size:14px;font-weight:400;color:#1e1e1e;letter-spacing:0.346px;transform:scaleX(1.0674);transform-origin:0 0;">Unassigned</div>
<div class="t" style="left:1649.6px;top:643.15px;font-size:14px;font-weight:400;color:#1e1e1e;letter-spacing:0.424px;transform:scaleX(1.0890);transform-origin:0 0;">24/06/2025</div>
<div class="r" style="left:256px;top:679.0px;width:1633px;height:1.0px;background:#e4e4e4"></div>
<div class="r" style="left:278.2px;top:698.9px;width:17.80000000000001px;height:17.899999999999977px;border:2px solid #5c5c5c;border-radius:3px;box-sizing:border-box"></div>
<div class="t" style="left:329.8px;top:699.05px;font-size:14px;font-weight:700;color:#111;letter-spacing:0.176px;transform:scaleX(1.0363);transform-origin:0 0;">Arjun Nair</div>
<div class="t" style="left:666.9px;top:701.15px;font-size:14px;font-weight:400;color:#1e1e1e;letter-spacing:0.328px;transform:scaleX(1.0737);transform-origin:0 0;">Skyline_Structures__892609</div>
<div class="t" style="left:997.8px;top:701.15px;font-size:14px;font-weight:400;color:#3a3a3a;letter-spacing:0.249px;transform:scaleX(1.0612);transform-origin:0 0;">Residential Project</div>
<svg class="r" style="left:1213px;top:696px" width="25" height="25" viewBox="0 0 24 24"><circle cx="12" cy="12" r="11.1" fill="#efefef" stroke="#000" stroke-width="1.9"/>
<path d="M12,2.9 Q16.3,2.9 16.2,7.6 Q16.7,8.9 15.8,9.6 Q15,12.2 13.5,13.1 L10.5,13.1 Q9,12.2 8.2,9.6 Q7.4,8.9 7.9,7.6 Q7.8,2.9 12,2.9Z" fill="#000"/>
<path d="M1.8,16.6 Q3.5,14.3 9,13.3 L12,17 L15,13.3 Q20.5,14.3 22.2,16.6 A11,11 0 0 1 1.8,16.6Z" fill="#000"/>
<path d="M10,12.2 H14 L15,13.5 L12,19 L9,13.5Z" fill="#000"/><path d="M10.1,14.2 L11.4,20.5 M13.9,14.2 L12.6,20.5" stroke="#e6e6e6" stroke-width="0.9"/></svg>
<div class="t" style="left:1245.1px;top:701.15px;font-size:14px;font-weight:400;color:#1e1e1e;letter-spacing:0.301px;transform:scaleX(1.0617);transform-origin:0 0;">Joe Smith</div>
<svg class="r" style="left:1433px;top:698px" width="21" height="21" viewBox="0 0 21 21"><circle cx="10.5" cy="10.5" r="10.5" fill="#bdbdbd"/><circle cx="10.5" cy="7.8" r="3" fill="#fff"/><path d="M5,15.5 Q5.5,11.8 10.5,11.8 Q15.5,11.8 16,15.5Z" fill="#fff"/></svg>
<div class="t" style="left:1463.6px;top:701.15px;font-size:14px;font-weight:400;color:#1e1e1e;letter-spacing:0.346px;transform:scaleX(1.0674);transform-origin:0 0;">Unassigned</div>
<div class="t" style="left:1649.6px;top:701.15px;font-size:14px;font-weight:400;color:#1e1e1e;letter-spacing:0.424px;transform:scaleX(1.0890);transform-origin:0 0;">22/09/2025</div>
<div class="r" style="left:256px;top:737.0px;width:1633px;height:1.0px;background:#e4e4e4"></div>
<div class="r" style="left:278.2px;top:756.9px;width:17.80000000000001px;height:17.899999999999977px;border:2px solid #5c5c5c;border-radius:3px;box-sizing:border-box"></div>
<div class="t" style="left:329.8px;top:757.05px;font-size:14px;font-weight:700;color:#111;letter-spacing:0.152px;transform:scaleX(1.0274);transform-origin:0 0;">ASAC Merkert</div>
<div class="t" style="left:666.9px;top:759.15px;font-size:14px;font-weight:400;color:#1e1e1e;letter-spacing:0.342px;transform:scaleX(1.0713);transform-origin:0 0;">Shanghai Tower</div>
<div class="t" style="left:997.8px;top:759.15px;font-size:14px;font-weight:400;color:#3a3a3a;letter-spacing:0.178px;transform:scaleX(1.0408);transform-origin:0 0;">Exterior Design</div>
<svg class="r" style="left:1213px;top:754px" width="25" height="25" viewBox="0 0 24 24"><circle cx="12" cy="12" r="11.1" fill="#efefef" stroke="#000" stroke-width="1.9"/>
<path d="M12,2.9 Q16.3,2.9 16.2,7.6 Q16.7,8.9 15.8,9.6 Q15,12.2 13.5,13.1 L10.5,13.1 Q9,12.2 8.2,9.6 Q7.4,8.9 7.9,7.6 Q7.8,2.9 12,2.9Z" fill="#000"/>
<path d="M1.8,16.6 Q3.5,14.3 9,13.3 L12,17 L15,13.3 Q20.5,14.3 22.2,16.6 A11,11 0 0 1 1.8,16.6Z" fill="#000"/>
<path d="M10,12.2 H14 L15,13.5 L12,19 L9,13.5Z" fill="#000"/><path d="M10.1,14.2 L11.4,20.5 M13.9,14.2 L12.6,20.5" stroke="#e6e6e6" stroke-width="0.9"/></svg>
<div class="t" style="left:1245.1px;top:759.15px;font-size:14px;font-weight:400;color:#1e1e1e;letter-spacing:0.301px;transform:scaleX(1.0617);transform-origin:0 0;">Joe Smith</div>
<svg class="r" style="left:1433px;top:756px" width="21" height="21" viewBox="0 0 21 21"><circle cx="10.5" cy="10.5" r="10.5" fill="#bdbdbd"/><circle cx="10.5" cy="7.8" r="3" fill="#fff"/><path d="M5,15.5 Q5.5,11.8 10.5,11.8 Q15.5,11.8 16,15.5Z" fill="#fff"/></svg>
<div class="t" style="left:1463.6px;top:759.15px;font-size:14px;font-weight:400;color:#1e1e1e;letter-spacing:0.346px;transform:scaleX(1.0674);transform-origin:0 0;">Unassigned</div>
<div class="t" style="left:1649.6px;top:759.15px;font-size:14px;font-weight:400;color:#1e1e1e;letter-spacing:0.424px;transform:scaleX(1.0890);transform-origin:0 0;">24/06/2025</div>
<div class="r" style="left:256px;top:795.0px;width:1633px;height:1.0px;background:#e4e4e4"></div>
<div class="r" style="left:278.2px;top:814.9px;width:17.80000000000001px;height:17.899999999999977px;border:2px solid #5c5c5c;border-radius:3px;box-sizing:border-box"></div>
<div class="t" style="left:329.8px;top:815.05px;font-size:14px;font-weight:700;color:#111;letter-spacing:0.289px;transform:scaleX(1.0568);transform-origin:0 0;">Badger (Brandon Mayhew)</div>
<div class="t" style="left:666.9px;top:817.15px;font-size:14px;font-weight:400;color:#1e1e1e;letter-spacing:0.297px;transform:scaleX(1.0685);transform-origin:0 0;">Millennium Bridge</div>
<div class="t" style="left:997.8px;top:817.15px;font-size:14px;font-weight:400;color:#3a3a3a;letter-spacing:0.178px;transform:scaleX(1.0408);transform-origin:0 0;">Exterior Design</div>
<svg class="r" style="left:1213px;top:812px" width="25" height="25" viewBox="0 0 24 24"><circle cx="12" cy="12" r="11.1" fill="#efefef" stroke="#000" stroke-width="1.9"/>
<path d="M12,2.9 Q16.3,2.9 16.2,7.6 Q16.7,8.9 15.8,9.6 Q15,12.2 13.5,13.1 L10.5,13.1 Q9,12.2 8.2,9.6 Q7.4,8.9 7.9,7.6 Q7.8,2.9 12,2.9Z" fill="#000"/>
<path d="M1.8,16.6 Q3.5,14.3 9,13.3 L12,17 L15,13.3 Q20.5,14.3 22.2,16.6 A11,11 0 0 1 1.8,16.6Z" fill="#000"/>
<path d="M10,12.2 H14 L15,13.5 L12,19 L9,13.5Z" fill="#000"/><path d="M10.1,14.2 L11.4,20.5 M13.9,14.2 L12.6,20.5" stroke="#e6e6e6" stroke-width="0.9"/></svg>
<div class="t" style="left:1245.1px;top:817.15px;font-size:14px;font-weight:400;color:#1e1e1e;letter-spacing:0.301px;transform:scaleX(1.0617);transform-origin:0 0;">Joe Smith</div>
<svg class="r" style="left:1433px;top:814px" width="21" height="21" viewBox="0 0 21 21"><circle cx="10.5" cy="10.5" r="10.5" fill="#bdbdbd"/><circle cx="10.5" cy="7.8" r="3" fill="#fff"/><path d="M5,15.5 Q5.5,11.8 10.5,11.8 Q15.5,11.8 16,15.5Z" fill="#fff"/></svg>
<div class="t" style="left:1463.6px;top:817.15px;font-size:14px;font-weight:400;color:#1e1e1e;letter-spacing:0.346px;transform:scaleX(1.0674);transform-origin:0 0;">Unassigned</div>
<div class="t" style="left:1649.6px;top:817.15px;font-size:14px;font-weight:400;color:#1e1e1e;letter-spacing:0.424px;transform:scaleX(1.0890);transform-origin:0 0;">24/06/2025</div>
<div class="r" style="left:256px;top:853.0px;width:1633px;height:1.0px;background:#e4e4e4"></div>
<div class="r" style="left:278.2px;top:872.9px;width:17.80000000000001px;height:17.899999999999977px;border:2px solid #5c5c5c;border-radius:3px;box-sizing:border-box"></div>
<div class="t" style="left:329.8px;top:873.05px;font-size:14px;font-weight:700;color:#111;letter-spacing:0.155px;transform:scaleX(1.0329);transform-origin:0 0;">Brock Cantillo</div>
<div class="t" style="left:666.9px;top:875.15px;font-size:14px;font-weight:400;color:#1e1e1e;letter-spacing:0.347px;transform:scaleX(1.0716);transform-origin:0 0;">Pompidou Centre</div>
<div class="t" style="left:997.8px;top:875.15px;font-size:14px;font-weight:400;color:#3a3a3a;letter-spacing:0.284px;transform:scaleX(1.0776);transform-origin:0 0;">Institutional Project</div>
<svg class="r" style="left:1213px;top:870px" width="25" height="25" viewBox="0 0 24 24"><circle cx="12" cy="12" r="11.1" fill="#efefef" stroke="#000" stroke-width="1.9"/>
<path d="M12,2.9 Q16.3,2.9 16.2,7.6 Q16.7,8.9 15.8,9.6 Q15,12.2 13.5,13.1 L10.5,13.1 Q9,12.2 8.2,9.6 Q7.4,8.9 7.9,7.6 Q7.8,2.9 12,2.9Z" fill="#000"/>
<path d="M1.8,16.6 Q3.5,14.3 9,13.3 L12,17 L15,13.3 Q20.5,14.3 22.2,16.6 A11,11 0 0 1 1.8,16.6Z" fill="#000"/>
<path d="M10,12.2 H14 L15,13.5 L12,19 L9,13.5Z" fill="#000"/><path d="M10.1,14.2 L11.4,20.5 M13.9,14.2 L12.6,20.5" stroke="#e6e6e6" stroke-width="0.9"/></svg>
<div class="t" style="left:1245.1px;top:875.15px;font-size:14px;font-weight:400;color:#1e1e1e;letter-spacing:0.301px;transform:scaleX(1.0617);transform-origin:0 0;">Joe Smith</div>
<svg class="r" style="left:1433px;top:872px" width="21" height="21" viewBox="0 0 21 21"><circle cx="10.5" cy="10.5" r="10.5" fill="#bdbdbd"/><circle cx="10.5" cy="7.8" r="3" fill="#fff"/><path d="M5,15.5 Q5.5,11.8 10.5,11.8 Q15.5,11.8 16,15.5Z" fill="#fff"/></svg>
<div class="t" style="left:1463.6px;top:875.15px;font-size:14px;font-weight:400;color:#1e1e1e;letter-spacing:0.346px;transform:scaleX(1.0674);transform-origin:0 0;">Unassigned</div>
<div class="t" style="left:1649.6px;top:875.15px;font-size:14px;font-weight:400;color:#1e1e1e;letter-spacing:0.424px;transform:scaleX(1.0890);transform-origin:0 0;">24/06/2025</div>
<div class="r" style="left:256px;top:911.0px;width:1633px;height:1.0px;background:#e4e4e4"></div>
<div class="r" style="left:278.2px;top:930.9px;width:17.80000000000001px;height:17.899999999999977px;border:2px solid #5c5c5c;border-radius:3px;box-sizing:border-box"></div>
<div class="t" style="left:329.8px;top:931.05px;font-size:14px;font-weight:700;color:#2090e0;letter-spacing:0.309px;transform:scaleX(1.0585);transform-origin:0 0;">Carmen Molina</div>
<div class="t" style="left:666.9px;top:933.15px;font-size:14px;font-weight:400;color:#2090e0;letter-spacing:0.276px;transform:scaleX(1.0636);transform-origin:0 0;">Villa Rotonda</div>
<div class="t" style="left:997.8px;top:933.15px;font-size:14px;font-weight:400;color:#3a3a3a;letter-spacing:0.178px;transform:scaleX(1.0408);transform-origin:0 0;">Exterior Design</div>
<svg class="r" style="left:1213px;top:928px" width="25" height="25" viewBox="0 0 24 24"><circle cx="12" cy="12" r="11.1" fill="#efefef" stroke="#000" stroke-width="1.9"/>
<path d="M12,2.9 Q16.3,2.9 16.2,7.6 Q16.7,8.9 15.8,9.6 Q15,12.2 13.5,13.1 L10.5,13.1 Q9,12.2 8.2,9.6 Q7.4,8.9 7.9,7.6 Q7.8,2.9 12,2.9Z" fill="#000"/>
<path d="M1.8,16.6 Q3.5,14.3 9,13.3 L12,17 L15,13.3 Q20.5,14.3 22.2,16.6 A11,11 0 0 1 1.8,16.6Z" fill="#000"/>
<path d="M10,12.2 H14 L15,13.5 L12,19 L9,13.5Z" fill="#000"/><path d="M10.1,14.2 L11.4,20.5 M13.9,14.2 L12.6,20.5" stroke="#e6e6e6" stroke-width="0.9"/></svg>
<div class="t" style="left:1245.1px;top:933.15px;font-size:14px;font-weight:400;color:#1e1e1e;letter-spacing:0.301px;transform:scaleX(1.0617);transform-origin:0 0;">Joe Smith</div>
<svg class="r" style="left:1433px;top:930px" width="21" height="21" viewBox="0 0 21 21"><circle cx="10.5" cy="10.5" r="10.5" fill="#bdbdbd"/><circle cx="10.5" cy="7.8" r="3" fill="#fff"/><path d="M5,15.5 Q5.5,11.8 10.5,11.8 Q15.5,11.8 16,15.5Z" fill="#fff"/></svg>
<div class="t" style="left:1463.6px;top:933.15px;font-size:14px;font-weight:400;color:#1e1e1e;letter-spacing:0.346px;transform:scaleX(1.0674);transform-origin:0 0;">Unassigned</div>
<div class="t" style="left:1649.6px;top:933.15px;font-size:14px;font-weight:400;color:#1e1e1e;letter-spacing:0.424px;transform:scaleX(1.0890);transform-origin:0 0;">24/06/2025</div>
<div class="r" style="left:265px;top:453px;width:1572px;height:47px;border:2px solid #ff0000;border-radius:1px;box-sizing:border-box"></div>
<div class="r" style="left:1863.5px;top:914px;width:23.5px;height:32px;background:#44a6f5"></div>
<svg class="r" style="left:1863px;top:914px" width="24" height="32" viewBox="0 0 24 32"><g fill="#fff"><circle cx="12" cy="19" r="2"/><circle cx="12" cy="25" r="2"/><circle cx="12" cy="31" r="2"/></g></svg>
<div class="r" style="left:1825px;top:866px;width:60px;height:60px;background:#0766c8;border-radius:50% 6px 50% 50%;box-shadow:0 3px 6px rgba(0,0,0,0.3)"></div>
<svg class="r" style="left:1843px;top:887px" width="25" height="19" viewBox="0 0 25 19"><path d="M4,1 H19 Q23,1 23,5 V13 Q23,17 19,17 H4 Q1,17 1,14 V5 Q1,1 4,1Z" fill="#fff"/><rect x="5" y="5" width="14" height="1.6" fill="#0b5cb0"/><rect x="5" y="10" width="9" height="1.6" fill="#0b5cb0"/></svg>
<svg class="r" style="left:1194px;top:913px" width="15" height="21" viewBox="0 0 15 21"><path d="M1.5,1.5 L1.5,17 L5,13.5 L8,19.5 L10.5,18.5 L7.8,12.5 L12.5,12.5 Z" fill="#fff" stroke="#111" stroke-width="1.2" stroke-linejoin="round"/></svg>
</body></html>
